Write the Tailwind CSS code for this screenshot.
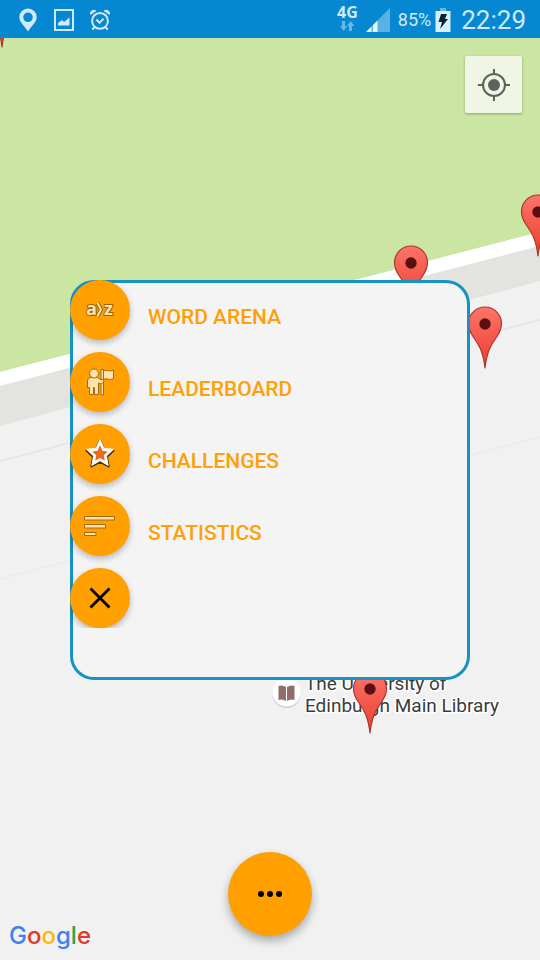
<!DOCTYPE html>
<html lang="en">
<head>
<meta charset="utf-8">
<meta name="viewport" content="width=device-width, initial-scale=1">
<title>Word map</title>
<script src="https://cdn.jsdelivr.net/npm/@tailwindcss/browser@4"></script>
</head>
<body class="bg-[#f1f1f1] font-['Roboto',sans-serif]">
<div class="relative flex min-h-screen flex-col overflow-hidden">

  <!-- Map canvas -->
  <svg class="absolute inset-0 h-full w-full" viewBox="0 0 540 960" preserveAspectRatio="xMidYMid slice" role="img" aria-label="Map">
    <defs>
      <linearGradient id="pinFill" x1="0" y1="0" x2="0" y2="1">
        <stop offset="0" stop-color="#fc7469"/>
        <stop offset="1" stop-color="#ee3c2e"/>
      </linearGradient>
      <g id="pin">
        <path d="M0 0C-2 -17 -6 -23 -11 -30C-14.500 -35 -16.500 -39 -16.500 -44.500A16.500 16.500 0 0 1 16.500 -44.500C16.500 -39 14.500 -35 11 -30C6 -23 2 -17 0 0Z" fill="url(#pinFill)" stroke="#a8382c" stroke-width="1.200" stroke-linejoin="round"/>
        <circle cy="-44" r="5.700" fill="#5a1010"/>
      </g>
    </defs>
    <rect width="540" height="960" fill="#f1f1f1"/>
    <path d="M0 0H540V232L0 372Z" fill="#cbe6a3"/>
    <path d="M0 372L540 232V246L0 386Z" fill="#fff"/>
    <path d="M0 386L540 246V281L0 426Z" fill="#e3e4e0"/>
    <path d="M0 461L540 320" stroke="#e4e4e4" stroke-width="1.500"/>
    <path d="M0 579L540 437" stroke="#e8e8e8"/>
    <circle cx="286.500" cy="694" r="14" fill="#ccc"/>
    <circle cx="286.500" cy="692.500" r="14" fill="#fff"/>
    <path d="M278.500 686Q282.500 684.500 286 687V701Q282.500 698.500 278.500 700ZM294.500 686Q290.500 684.500 287 687V701Q290.500 698.500 294.500 700Z" fill="#8d6e68"/>
    <g font-size="19" fill="#3b3b3b" stroke="#fff" stroke-width="3" stroke-linejoin="round" paint-order="stroke">
      <text x="305" y="690">The University of</text>
      <text x="305" y="712">Edinburgh Main Library</text>
    </g>
    <use href="#pin" x="2" y="47"/>
    <use href="#pin" x="538" y="256"/>
    <use href="#pin" x="411" y="307"/>
    <use href="#pin" x="485" y="368"/>
    <use href="#pin" x="370" y="733"/>
  </svg>

  <!-- Status bar -->
  <header class="relative flex h-[38px] items-center justify-between bg-[#0588d1] pt-[2px] pr-[14px] pl-[18px] text-[#cfeafb]">
    <div class="flex items-center gap-4">
      <svg class="h-6 w-5" viewBox="0 0 20 24" fill="currentColor" aria-hidden="true"><path fill-rule="evenodd" d="M10 .5A8.700 8.700 0 0 0 1.300 9.200C1.300 14 6 17 10 23.500C14 17 18.700 14 18.700 9.200A8.700 8.700 0 0 0 10 .5ZM10 4.500A4.800 4.800 0 1 1 10 14.100A4.800 4.800 0 0 1 10 4.500Z"/></svg>
      <svg class="h-6 w-5" viewBox="0 0 20 24" aria-hidden="true"><rect x="1" y="2" width="18" height="20" fill="none" stroke="currentColor" stroke-width="2"/><path d="M4 17.500V15L8 12L10 14L15.500 9.500V17.500Z" fill="currentColor"/></svg>
      <svg class="h-6 w-5" viewBox="1 0 22 24" fill="none" stroke="currentColor" stroke-width="2.200" aria-hidden="true"><circle cx="12" cy="13" r="8.700"/><path d="M8 11.500L11.500 15L16 10.500M6 20L3.500 22.500M18 20L20.500 22.500"/><path d="M1.500 6.500A4 4 0 0 1 8 2ZM22.500 6.500A4 4 0 0 0 16 2Z" fill="currentColor" stroke="none"/></svg>
    </div>
    <div class="flex items-center gap-2">
      <div class="flex flex-col items-center pb-1">
        <span class="font-['Open_Sans',sans-serif] text-base leading-4 font-bold">4G</span>
        <svg class="h-3 w-4" viewBox="0 0 16 12" fill="#67b8e4" aria-hidden="true"><path d="M3 1H6V6H8.500L4.500 11L1 6H3ZM10 11H13V6H15.500L11.500 1L8 6H10Z"/></svg>
      </div>
      <svg class="h-6 w-6" viewBox="0 0 24 24" aria-hidden="true"><path d="M0 24L24 0V24Z" fill="#5ab2e2"/><path d="M0 24L5.500 18.500V24ZM7 24V17L11.500 12.500V24Z" fill="#e2f4ff"/></svg>
      <div class="flex items-center gap-1">
        <span class="text-lg">85%</span>
        <svg class="h-6 w-4" viewBox="0 0 16 24" aria-hidden="true"><path d="M5 0H11V3H5Z" fill="#67b8e4"/><path d="M.5 3H15.500V24H.5Z" fill="#d8f0ff"/><path d="M6 6H12L10 11H13L5 21L7 14H3.500Z" fill="#0d2233"/></svg>
      </div>
      <time class="pl-[2px] text-[26px] leading-8">22:29</time>
    </div>
  </header>

  <button type="button" aria-label="My location" class="relative mt-[18px] mr-[18px] flex size-[57px] items-center justify-center self-end rounded-xs bg-[#f0f6e3] shadow-[0_1px_3px_rgba(0,0,0,0.3)]">
    <svg class="size-8" viewBox="0 0 32 32" fill="none" stroke="#5f625c" stroke-width="2" aria-hidden="true"><circle cx="16" cy="16" r="11"/><circle cx="16" cy="16" r="6" fill="#5f625c" stroke="none"/><path d="M16 0V5M16 27V32M0 16H5M27 16H32"/></svg>
  </button>

  <!-- Menu dialog -->
  <div class="pointer-events-none absolute inset-0 flex items-center justify-center">
    <nav aria-label="Menu" class="pointer-events-auto w-full max-w-[400px] rounded-3xl bg-[#f4f4f4] pb-[52px] shadow-[inset_0_0_0_3px_#1593c1]">
      <ul class="flex flex-col gap-3 overflow-hidden">
        <li>
          <button type="button" class="flex items-center gap-[18px] text-[21px] font-medium text-[#ffa006]">
            <span class="flex size-[60px] items-center justify-center rounded-full bg-[#ffa000] shadow-[0_3px_6px_rgba(0,0,0,0.25)]">
              <svg class="size-8" viewBox="0 0 32 32" aria-hidden="true"><g font-family="Open Sans, sans-serif" font-size="18" font-weight="700" fill="#ffe2ab" stroke="#9a6410" stroke-width="2" paint-order="stroke"><text x="2" y="21">a</text><text x="20" y="21">z</text></g><path d="M13.500 9L17 15.500L13.500 22" fill="none" stroke="#9a6410" stroke-width="4"/><path d="M13.500 9L17 15.500L13.500 22" fill="none" stroke="#ffe2ab" stroke-width="2"/></svg>
            </span>
            <span class="pt-4">WORD ARENA</span>
          </button>
        </li>
        <li>
          <button type="button" class="flex items-center gap-[18px] text-[21px] font-medium text-[#ffa006]">
            <span class="flex size-[60px] items-center justify-center rounded-full bg-[#ffa000] shadow-[0_3px_6px_rgba(0,0,0,0.25)]">
              <svg class="size-8" viewBox="0 0 32 32" fill="#ffe2ab" stroke="#a56b12" stroke-linejoin="round" aria-hidden="true"><path d="M17 3.500H19.500V29H17Z"/><path d="M19.500 5C23 3 25 6.500 29.500 4V12.500C25 15 23 11.500 19.500 13.500Z"/><path d="M5.500 11.500H13.500L17 14L19 13L20 15.500L17 18L14.500 17V28.500H10.500V21.500H9.500V28.500H5.500V21.500H3.500V14Z"/><circle cx="10" cy="7.500" r="4.500"/></svg>
            </span>
            <span class="pt-4">LEADERBOARD</span>
          </button>
        </li>
        <li>
          <button type="button" class="flex items-center gap-[18px] text-[21px] font-medium text-[#ffa006]">
            <span class="flex size-[60px] items-center justify-center rounded-full bg-[#ffa000] shadow-[0_3px_6px_rgba(0,0,0,0.25)]">
              <svg class="size-9" viewBox="0 0 32 32" stroke-linejoin="round" aria-hidden="true"><path d="M16 4L19.700 11.800L28 12.900L22 18.500L23.600 27L16 22.800L8.400 27L10 18.500L4 12.900L12.300 11.800Z" fill="#4a300c" stroke="#4a300c" stroke-width="2"/><path d="M16 3L19.500 10.800L28 11.900L21.700 17.800L23.300 26.200L16 22L8.700 26.200L10.300 17.800L4 11.900L12.500 10.800Z" fill="#fff" stroke="#fff" stroke-width=".8"/><path d="M16 8L18.100 13L23 13.700L19.400 17.200L20.300 22L16 19.500L11.700 22L12.600 17.200L9 13.700L13.900 13Z" fill="#ec6a1c"/></svg>
            </span>
            <span class="pt-4">CHALLENGES</span>
          </button>
        </li>
        <li>
          <button type="button" class="flex items-center gap-[18px] text-[21px] font-medium text-[#ffa006]">
            <span class="flex size-[60px] items-center justify-center rounded-full bg-[#ffa000] shadow-[0_3px_6px_rgba(0,0,0,0.25)]">
              <svg class="size-8" viewBox="0 0 32 32" fill="#ffe2ab" stroke="#a56b12" aria-hidden="true"><path d="M.5 6.500H30.500V10H.5ZM.5 14.500H21.500V18H.5ZM.5 22.500H12V25.500H.5Z"/></svg>
            </span>
            <span class="pt-4">STATISTICS</span>
          </button>
        </li>
        <li>
          <button type="button" aria-label="Close menu" class="flex size-[60px] items-center justify-center rounded-full bg-[#ffa000] shadow-[0_3px_6px_rgba(0,0,0,0.25)]">
            <svg class="size-6" viewBox="0 0 24 24" fill="none" stroke="#000" stroke-width="2.800" aria-hidden="true"><path d="M2.500 2.500L21.500 21.500M21.500 2.500L2.500 21.500"/></svg>
          </button>
        </li>
      </ul>
    </nav>
  </div>

  <footer class="relative mt-auto grid grid-cols-3 items-end pb-2">
    <div class="pl-[9px] font-['Inter',sans-serif] text-2xl leading-8 font-medium" aria-label="Google"><span class="text-[#4081ec]">G</span><span class="text-[#e2382e]">o</span><span class="text-[#f8b90b]">o</span><span class="text-[#4081ec]">g</span><span class="text-[#2fa24f]">l</span><span class="text-[#e2382e]">e</span></div>
    <button type="button" aria-label="More options" class="mb-4 flex size-[84px] items-center justify-center justify-self-center rounded-full bg-[#ffa000] shadow-[0_5px_10px_rgba(0,0,0,0.3)]">
      <svg class="size-6" viewBox="0 0 24 24" aria-hidden="true"><circle cx="3" cy="12" r="3"/><circle cx="12" cy="12" r="3"/><circle cx="21" cy="12" r="3"/></svg>
    </button>
  </footer>
</div>
</body>
</html>
